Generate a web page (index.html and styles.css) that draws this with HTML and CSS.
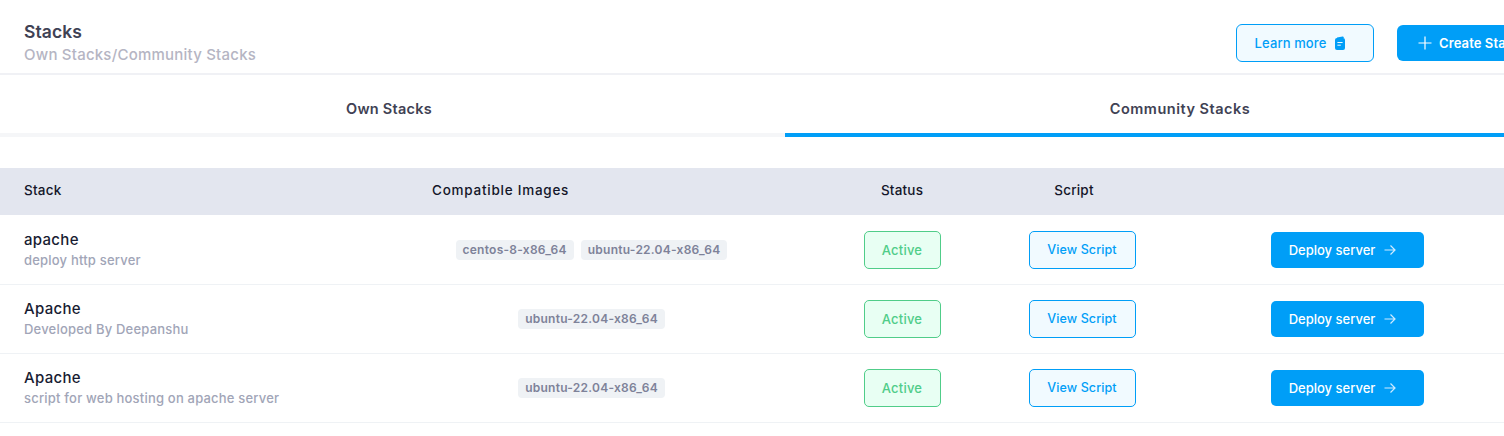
FILE: index.html
```html
<!DOCTYPE html>
<html lang="en">
<head>
<meta charset="utf-8">
<title>Stacks</title>
<link rel="stylesheet" href="styles.css">
</head>
<body>
<div class="page">
  <header class="top">
    <div class="top-text">
      <h1>Stacks</h1>
      <p>Own Stacks/Community Stacks</p>
    </div>
    <div class="top-actions">
      <a class="btn btn-learn">Learn more
        <svg class="ico-doc" viewBox="0 0 12 14" width="12" height="14"><path fill="#009ef7" d="M3 1.6 8.6.4c.6-.1 1 .2 1.1.8l.1.8H3z"/><rect fill="#009ef7" x="1" y="2" width="10" height="12" rx="2"/><path stroke="#f1faff" stroke-width="1" d="M3.4 6.5h5.2M3.4 9.2h3.4"/></svg>
      </a>
      <a class="btn btn-create">
        <svg viewBox="0 0 14 14" width="14" height="14"><path stroke="#fff" stroke-width="1.2" fill="none" d="M7 .5v13M.5 7h13"/></svg>
        Create Stack
      </a>
    </div>
  </header>
  <nav class="tabs">
    <div class="tab">Own Stacks</div>
    <div class="tab tab-active">Community Stacks</div>
  </nav>
  <section class="table">
    <div class="row row-head">
      <div class="cell-name">Stack</div>
      <div class="cell-images-head">Compatible Images</div>
      <div class="cell-center">Status</div>
      <div class="cell-script-head">Script</div>
      <div></div>
    </div>
    <div class="row">
      <div class="cell-name"><div class="name">apache</div><div class="desc">deploy http server</div></div>
      <div class="cell-images"><span class="chip">centos-8-x86_64</span><span class="chip">ubuntu-22.04-x86_64</span></div>
      <div class="cell-center"><span class="badge">Active</span></div>
      <div class="cell-center"><a class="btn-script">View Script</a></div>
      <div class="cell-center"><a class="btn-deploy">Deploy server <svg viewBox="0 0 12 12" width="12" height="12"><path d="M.5 6h10.5M6.5 1.5 11 6l-4.500 4.500" fill="none" stroke="#cfeaff" stroke-width="1.200"/></svg></a></div>
    </div>
    <div class="row">
      <div class="cell-name"><div class="name">Apache</div><div class="desc">Developed By Deepanshu</div></div>
      <div class="cell-images"><span class="chip">ubuntu-22.04-x86_64</span></div>
      <div class="cell-center"><span class="badge">Active</span></div>
      <div class="cell-center"><a class="btn-script">View Script</a></div>
      <div class="cell-center"><a class="btn-deploy">Deploy server <svg viewBox="0 0 12 12" width="12" height="12"><path d="M.5 6h10.5M6.5 1.5 11 6l-4.500 4.500" fill="none" stroke="#cfeaff" stroke-width="1.200"/></svg></a></div>
    </div>
    <div class="row">
      <div class="cell-name"><div class="name">Apache</div><div class="desc">script for web hosting on apache server</div></div>
      <div class="cell-images"><span class="chip">ubuntu-22.04-x86_64</span></div>
      <div class="cell-center"><span class="badge">Active</span></div>
      <div class="cell-center"><a class="btn-script">View Script</a></div>
      <div class="cell-center"><a class="btn-deploy">Deploy server <svg viewBox="0 0 12 12" width="12" height="12"><path d="M.5 6h10.5M6.5 1.5 11 6l-4.500 4.500" fill="none" stroke="#cfeaff" stroke-width="1.200"/></svg></a></div>
    </div>
  </section>
</div>
</body>
</html>
```
FILE: styles.css
```css
* { box-sizing: border-box; }
html, body { margin: 0; height: 100%; overflow: hidden; background: #fff; }
body { font-family: "Inter", "Liberation Sans", sans-serif; font-size: 13px; color: #0f1222; }
.page { width: 1575px; }

.top { height: 75px; border-bottom: 2px solid #f0f1f5; display: flex; align-items: flex-start; justify-content: space-between; padding: 21px 0 0 24px; }
.top h1 { margin: 0; font-size: 17.500px; letter-spacing: .1px; line-height: 22px; font-weight: 600; color: #3f4254; }
.top p { margin: 1px 0 0; font-size: 15px; letter-spacing: .22px; line-height: 22px; font-weight: 500; color: #b5b5c3; }
.top-actions { display: flex; gap: 23px; margin-top: 3px; }
.btn { display: flex; align-items: center; height: 38px; border-radius: 6px; font-size: 13px; letter-spacing: .1px; font-weight: 500; }
.btn-learn { width: 138px; justify-content: center; gap: 8px; border: 1px solid #009ef7; background: #f1faff; color: #009ef7; padding-right: 9px; }
.btn-create { width: 178px; margin-top: 1px; height: 36px; padding-left: 21px; gap: 7px; background: #009ef7; color: #fff; font-weight: 600; }

.tabs { display: flex; height: 62px; }
.tab { flex: 1; display: flex; align-items: center; justify-content: center; padding-top: 8px; border-bottom: 4px solid #f5f6f8; font-size: 14.500px; letter-spacing: .5px; font-weight: 600; color: #3f4254; }
.tab:first-child { flex: 0 0 785px; padding-right: 7px; letter-spacing: .25px; }
.tab-active { border-bottom-color: #009ef7; }

.table { margin-top: 31px; }
.row { display: grid; grid-template-columns: 340px 502px 120px 240px 291px 82px; height: 69px; align-items: center; border-bottom: 1px solid #eff2f5; }
.row-head { height: 48px; padding-bottom: 4px; background: #e3e6ef; background-clip: padding-box; border-bottom: 1px solid #fff; font-weight: 500; font-size: 13.500px; letter-spacing: .2px; color: #14162a; }
.row-head .cell-images-head { letter-spacing: .75px; }
.cell-name { padding-left: 24px; }
.cell-images-head { padding-left: 92px; }
.cell-center { text-align: center; }
.cell-script-head { text-align: center; padding-right: 16px; }
.cell-images { display: flex; justify-content: center; gap: 7px; padding-left: 1px; }
.name { font-size: 15px; letter-spacing: .3px; line-height: 20px; font-weight: 500; color: #181c32; }
.desc { font-size: 13px; letter-spacing: .2px; line-height: 20px; font-weight: 500; color: #a1a5b7; }
.chip { height: 20px; line-height: 20px; padding: 0 7px; border-radius: 4px; background: #eff2f5; color: #7e8299; font-size: 12px; letter-spacing: .25px; font-weight: 600; }
.badge { display: inline-block; width: 77px; height: 38px; line-height: 36px; border: 1px solid #50cd89; border-radius: 5px; background: #e8fff3; color: #50cd89; font-size: 13px; letter-spacing: .2px; font-weight: 500; }
.btn-script { display: inline-block; width: 107px; height: 38px; line-height: 36px; border: 1px solid #009ef7; border-radius: 5px; background: #f1faff; color: #009ef7; font-size: 12.500px; letter-spacing: .1px; font-weight: 500; }
.btn-deploy { display: inline-flex; align-items: center; justify-content: center; gap: 9px; width: 153px; height: 36px; padding-right: 10px; border-radius: 5px; background: #009ef7; color: #fff; font-size: 13px; font-weight: 500; }
```
